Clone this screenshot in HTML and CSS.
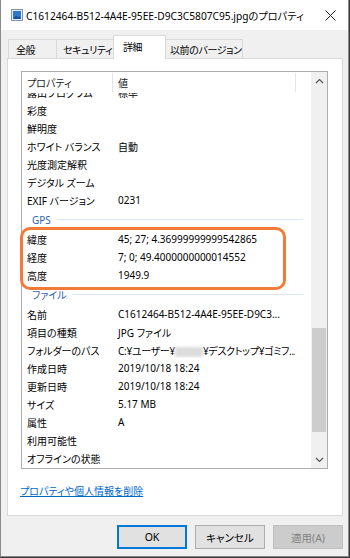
FILE: index.html
```html
<!DOCTYPE html>
<html lang="ja">
<head>
    <meta charset="UTF-8">
    <title>プロパティ</title>
    <link rel="stylesheet" href="styles.css">
</head>
<body>

    <div class="window">
        <!-- Title bar -->
        <div class="titlebar">
            <svg class="file-icon" width="12" height="12" viewBox="0 0 12 12">
                <rect x="0.5" y="0.5" width="11" height="11" fill="#e8eef6" stroke="#7d94b3"/>
                <rect x="2" y="2" width="8" height="8" fill="#2f78d0"/>
                <path d="M2 10 L5 6.5 L7 8.5 L8.5 7 L10 10 Z" fill="#1b4f95"/>
            </svg>
            <span class="title">C1612464-B512-4A4E-95EE-D9C3C5807C95.jpgのプロパティ</span>
            <svg class="close" width="11" height="11" viewBox="0 0 11 11">
                <path d="M0.5 0.5 L10.5 10.5 M10.5 0.5 L0.5 10.5" stroke="#222" stroke-width="1"/>
            </svg>
        </div>

        <!-- Tabs -->
        <div class="tabs">
            <div class="tab tab-general">全般</div>
            <div class="tab tab-security">セキュリティ</div>
            <div class="tab tab-details active">詳細</div>
            <div class="tab tab-versions">以前のバージョン</div>
        </div>

        <div class="panel">
            <div class="listview">
                <div class="list-main">
                    <div class="list-head">
                        <div class="head-name">プロパティ</div>
                        <div class="head-val">値</div>
                    </div>
                    <div class="list-body">
                        <!-- scrolled down a little -->
                        <div class="list-scroll" style="margin-top: -10px;">
                            <div class="row"><span class="name">露出プログラム</span><span class="val">標準</span></div>
                            <div class="row"><span class="name">彩度</span><span class="val"></span></div>
                            <div class="row"><span class="name">鮮明度</span><span class="val"></span></div>
                            <div class="row"><span class="name">ホワイト バランス</span><span class="val">自動</span></div>
                            <div class="row"><span class="name">光度測定解釈</span><span class="val"></span></div>
                            <div class="row"><span class="name">デジタル ズーム</span><span class="val"></span></div>
                            <div class="row"><span class="name">EXIF バージョン</span><span class="val">0231</span></div>

                            <div class="group">GPS</div>
                            <div class="row"><span class="name">緯度</span><span class="val">45; 27; 4.36999999999542865</span></div>
                            <div class="row"><span class="name">経度</span><span class="val">7; 0; 49.4000000000014552</span></div>
                            <div class="row"><span class="name">高度</span><span class="val">1949.9</span></div>

                            <div class="group">ファイル</div>
                            <div class="row"><span class="name">名前</span><span class="val">C1612464-B512-4A4E-95EE-D9C3...</span></div>
                            <div class="row"><span class="name">項目の種類</span><span class="val">JPG ファイル</span></div>
                            <div class="row"><span class="name">フォルダーのパス</span><span class="val path">C:¥ユーザー¥<span class="blur"></span>¥デスクトップ¥ゴミフ...</span></div>
                            <div class="row"><span class="name">作成日時</span><span class="val">2019/10/18 18:24</span></div>
                            <div class="row"><span class="name">更新日時</span><span class="val">2019/10/18 18:24</span></div>
                            <div class="row"><span class="name">サイズ</span><span class="val">5.17 MB</span></div>
                            <div class="row"><span class="name">属性</span><span class="val">A</span></div>
                            <div class="row"><span class="name">利用可能性</span><span class="val"></span></div>
                            <div class="row"><span class="name">オフラインの状態</span><span class="val"></span></div>
                            <div class="row"><span class="name">共有状態</span><span class="val"></span></div>
                        </div>
                    </div>
                </div>

                <div class="scrollbar">
                    <div class="arrow">
                        <svg width="9" height="6" viewBox="0 0 9 6"><polyline points="1,5 4.5,1.5 8,5" fill="none" stroke="#555" stroke-width="1.2"/></svg>
                    </div>
                    <div class="track">
                        <div class="thumb" style="margin-top: 239px;"></div>
                    </div>
                    <div class="arrow">
                        <svg width="9" height="6" viewBox="0 0 9 6"><polyline points="1,1 4.5,4.5 8,1" fill="none" stroke="#555" stroke-width="1.2"/></svg>
                    </div>
                </div>

                <!-- highlight drawn over the GPS rows -->
                <div class="highlight"></div>
            </div>

            <a class="remove-link" href="#">プロパティや個人情報を削除</a>
        </div>

        <div class="buttons">
            <button class="btn default">OK</button>
            <button class="btn">キャンセル</button>
            <button class="btn" disabled>適用(A)</button>
        </div>
    </div>

</body>
</html>
```

FILE: styles.css
```css
* {
    box-sizing: border-box;
}

body {
    margin: 0;
    background-color: #3a3a3a;
    font-family: "Noto Sans", "Noto Sans CJK JP", sans-serif;
    font-feature-settings: "palt";
    font-size: 10px;
    color: #000;
}

.window {
    width: 349px;
    height: 557px;
    background-color: #f0f0f0;
    border: 1px solid #8a8a8a;
    border-top: none;
    display: flex;
    flex-direction: column;
}

/* title bar */
.titlebar {
    height: 30px;
    background: #fff;
    display: flex;
    align-items: center;
    padding-left: 10px;
}

.file-icon {
    flex-shrink: 0;
}

.title {
    margin-left: 3px;
    font-size: 10.2px;
    white-space: nowrap;
    flex: 1;
}

.close {
    margin-right: 12px;
    flex-shrink: 0;
}

/* tabs */
.tabs {
    height: 28px;
    display: flex;
    align-items: flex-end;
    padding-left: 7px;
    position: relative;
    z-index: 1;
}

.tab {
    height: 19px;
    padding-left: 7px;
    border: 1px solid #d9d9d9;
    border-bottom: none;
    margin-right: -1px;
    display: flex;
    align-items: center;
    white-space: nowrap;
    letter-spacing: -0.4px;
}

.tab-general { width: 49px; }
.tab-security { width: 58px; padding-left: 6px; }
.tab-details { width: 53px; }
.tab-versions { width: 78px; padding-left: 4px; }

.tab.active {
    height: 24px;
    margin-bottom: -1px;
    padding-left: 9px;
    padding-bottom: 2px;
    background: #fff;
}

/* main panel */
.panel {
    margin-left: 6px;
    width: 336px;
    height: 458px;
    background: #fff;
    border: 1px solid #d9d9d9;
    padding: 12px 0 0 13px;
}

.listview {
    position: relative;
    width: 307px;
    height: 398px;
    border: 1px solid #adadad;
    display: flex;
}

.list-main {
    width: 289px;
    display: flex;
    flex-direction: column;
}

.list-head {
    height: 21px;
    display: flex;
    flex-shrink: 0;
}

.head-name,
.head-val {
    margin-top: 1px;
    height: 19px;
    display: flex;
    align-items: center;
    border-right: 1px solid #e5e5e5;
    color: #1a1a1a;
}

.head-name {
    width: 91px;
    padding-left: 5px;
}

.head-val {
    width: 183px;
    padding-left: 5px;
}

.list-body {
    flex: 1;
    overflow: hidden;
}

.row {
    height: 18px;
    display: flex;
    align-items: center;
    white-space: nowrap;
}

.row .name {
    width: 91px;
    padding-left: 5px;
    overflow: hidden;
}

.row .val {
    width: 182px;
    padding-left: 5px;
    overflow: hidden;
}

.row .path {
    letter-spacing: -0.3px;
}

.blur {
    display: inline-block;
    width: 28px;
    height: 10px;
    vertical-align: middle;
    background: #dcdcdc;
    filter: blur(1.5px);
}

.group {
    height: 21px;
    display: flex;
    align-items: center;
    gap: 6px;
    padding-left: 10px;
    color: #2f62ae;
}

.group::after {
    content: "";
    flex: 1;
    height: 1px;
    margin-right: 8px;
    background: #dfe6f0;
}

.highlight {
    position: absolute;
    left: -2px;
    top: 155px;
    width: 266px;
    height: 63px;
    border: 3px solid #f47a3a;
    border-radius: 10px;
}

/* scrollbar */
.scrollbar {
    width: 16px;
    background: #f0f0f0;
    display: flex;
    flex-direction: column;
}

.arrow {
    height: 17px;
    display: flex;
    align-items: center;
    justify-content: center;
}

.track {
    flex: 1;
}

.thumb {
    margin-left: 1px;
    width: 14px;
    height: 104px;
    background: #cdcdcd;
}

.remove-link {
    display: inline-block;
    margin-top: 14px;
    margin-left: -1px;
    color: #0066cc;
    text-decoration: underline;
}

/* bottom buttons */
.buttons {
    display: flex;
    justify-content: flex-end;
    gap: 8px;
    margin-top: 9px;
    padding-right: 5px;
}

.btn {
    width: 70px;
    height: 24px;
    background: #e1e1e1;
    border: 1px solid #adadad;
    font-family: inherit;
    font-feature-settings: "palt";
    font-size: 10.5px;
    color: #000;
    padding: 0;
}

.btn.default {
    border-color: #0078d7;
    box-shadow: inset 0 0 0 1px #0078d7;
}

.btn:disabled {
    background: #cccccc;
    border-color: #bfbfbf;
    color: #838383;
}
```
